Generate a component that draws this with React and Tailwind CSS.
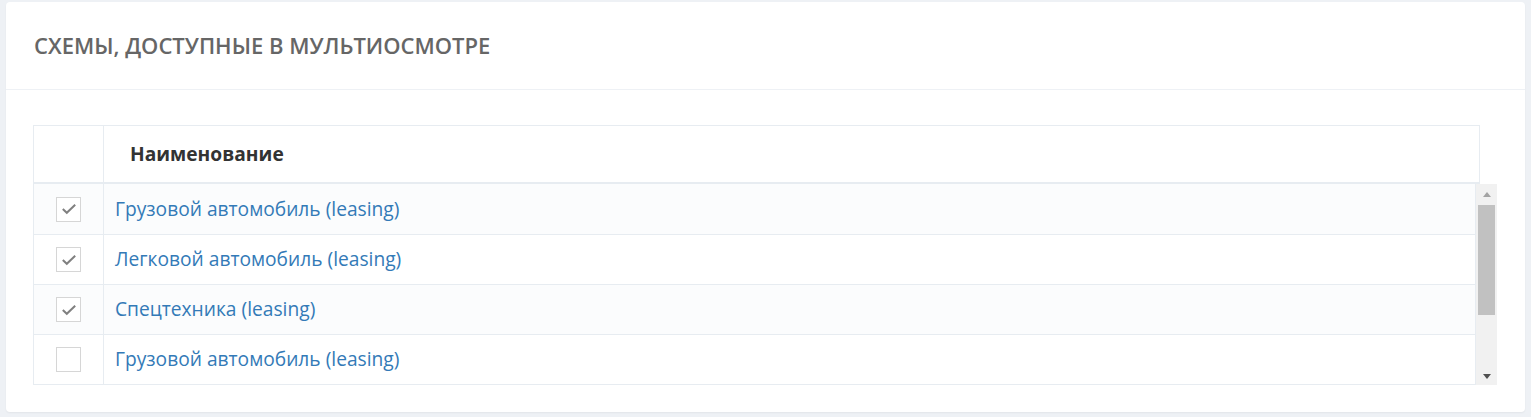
import React from "react";

const rows = [
  { name: "Грузовой автомобиль (leasing)", checked: true },
  { name: "Легковой автомобиль (leasing)", checked: true },
  { name: "Спецтехника (leasing)", checked: true },
  { name: "Грузовой автомобиль (leasing)", checked: false },
];

function Check({ checked }) {
  return (
    <span className="flex h-[25px] w-[25px] items-center justify-center border border-[#d6d6d6] bg-white">
      {checked && (
        <svg width="16" height="12" viewBox="0 0 16 12" fill="none">
          <path d="M1.8 6 L5.8 9.8 L14.2 1.8" stroke="#808080" strokeWidth="2" />
        </svg>
      )}
    </span>
  );
}

export default function App() {
  return (
    <div className="min-h-[417px] bg-[#eef1f5] px-[6px] pt-[2px] pb-[4px] font-['Open_Sans',sans-serif]">
      <div className="rounded-[4px] bg-white shadow-[0_1px_2px_rgba(0,0,0,0.05)]">
        <div className="flex h-[88px] items-center border-b border-[#eef1f5] px-[28px]">
          <h2 className="text-[22px] font-semibold uppercase text-[#666]">
            Схемы, доступные в мультиосмотре
          </h2>
        </div>

        <div className="px-[27px] pt-[35px] pb-[27px]">
          <div className="w-[1447px] border border-[#e7ecf1] border-b-2">
            <div className="flex h-[56px] items-center">
              <div className="h-full w-[70px] border-r border-[#e7ecf1]" />
              <div className="pl-[26px] text-[19.2px] font-bold text-[#333]">Наименование</div>
            </div>
          </div>

          <div className="flex w-[1464px]">
            <div className="flex-1 border-x border-b border-[#e7ecf1]">
              {rows.map((r, i) => (
                <div
                  key={i}
                  className={`flex h-[50px] ${i > 0 ? "border-t border-[#e7ecf1]" : ""} ${
                    i % 2 === 0 ? "bg-[#fbfcfd]" : "bg-white"
                  }`}
                >
                  <div className="flex w-[70px] items-center justify-center border-r border-[#e7ecf1]">
                    <Check checked={r.checked} />
                  </div>
                  <div className="flex items-center pl-[11px] text-[19.2px] text-[#337ab7]">
                    {r.name}
                  </div>
                </div>
              ))}
            </div>
            <div className="flex w-[21px] flex-col items-center bg-[#f1f1f1] pt-[8px]">
              <span className="h-0 w-0 border-x-[4px] border-b-[5px] border-x-transparent border-b-[#a3a3a3]" />
              <div className="mt-[8px] h-[110px] w-[17px] bg-[#c1c1c1]" />
              <div className="flex-1" />
              <span className="mb-[6px] h-0 w-0 border-x-[4px] border-t-[5px] border-x-transparent border-t-[#505050]" />
            </div>
          </div>
        </div>
      </div>
    </div>
  );
}
